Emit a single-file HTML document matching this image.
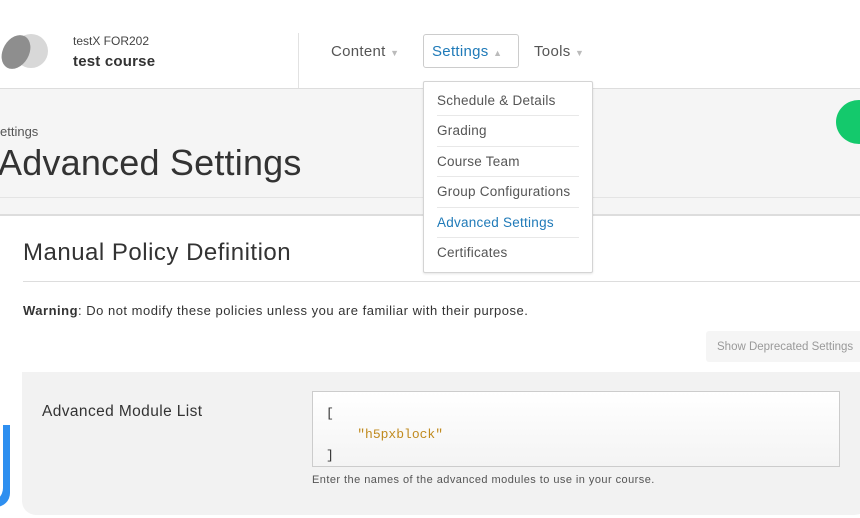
<!DOCTYPE html>
<html><head><style>
*{margin:0;padding:0;box-sizing:border-box}
body{width:860px;height:518px;overflow:hidden;background:#fff;font-family:"Liberation Sans",sans-serif;position:relative;color:#333}
.a{position:absolute;white-space:nowrap}
</style></head><body>
<div class="a" style="left:0;top:88px;width:860px;height:128px;background:#f5f5f5;border-top:1px solid #ddd;border-bottom:2px solid #ddd"></div>
<div class="a" style="left:0;top:197px;width:860px;height:1px;background:#e4e4e4"></div>
<div class="a" style="left:298px;top:33px;width:1px;height:55px;background:#e2e2e2"></div>
<div class="a" style="left:14px;top:34px;width:34px;height:34px;border-radius:50%;background:#d8d8d8"></div>
<div class="a" style="left:3px;top:34px;width:26px;height:36px;border-radius:50%;background:#8e8e8e;transform:rotate(30deg)"></div>
<div class="a" style="left:73px;top:34px;font-size:12px;color:#444">testX FOR202</div>
<div class="a" style="left:73px;top:53px;font-size:15px;font-weight:bold;color:#333;letter-spacing:0.2px">test course</div>
<div class="a" style="left:331px;top:43px;font-size:15px;color:#555;letter-spacing:0.3px">Content <span style="color:#bbb;font-size:9px">▼</span></div>
<div class="a" style="left:423px;top:34px;width:96px;height:34px;border:1px solid #ccc;border-radius:3px;background:#fff"></div>
<div class="a" style="left:432px;top:43px;font-size:15px;color:#1f7ab8;letter-spacing:0.3px">Settings <span style="color:#bbb;font-size:9px">▲</span></div>
<div class="a" style="left:534px;top:43px;font-size:15px;color:#555;letter-spacing:0.3px">Tools <span style="color:#bbb;font-size:9px">▼</span></div>
<div class="a" style="left:0;top:124px;font-size:13px;color:#555">ettings</div>
<div class="a" style="left:-2px;top:142px;font-size:36px;color:#333;letter-spacing:0.2px">Advanced Settings</div>
<div class="a" style="left:836px;top:100px;width:46px;height:44px;border-radius:50%;background:#14c96c"></div>
<div class="a" style="left:423px;top:81px;width:170px;height:192px;background:#fff;border:1px solid #d4d4d4;border-radius:2px;box-shadow:0 1px 2px rgba(0,0,0,.1)"></div>
<div class="a" style="left:437px;top:86px;font-size:13.5px;color:#555;line-height:30.4px;letter-spacing:0.25px">
Schedule &amp; Details<div style="height:1px;background:#e8e8e8;width:142px;margin-top:-1px"></div>
Grading<div style="height:1px;background:#e8e8e8;width:142px;margin-top:-1px"></div>
Course Team<div style="height:1px;background:#e8e8e8;width:142px;margin-top:-1px"></div>
Group Configurations<div style="height:1px;background:#e8e8e8;width:142px;margin-top:-1px"></div>
<span style="color:#1f7ab8">Advanced Settings</span><div style="height:1px;background:#e8e8e8;width:142px;margin-top:-1px"></div>
Certificates</div>
<div class="a" style="left:23px;top:239px;font-size:24px;color:#333;letter-spacing:0.5px">Manual Policy Definition</div>
<div class="a" style="left:23px;top:281px;width:837px;height:1px;background:#ddd"></div>
<div class="a" style="left:23px;top:303px;font-size:13px;color:#333;letter-spacing:0.5px"><b>Warning</b>: Do not modify these policies unless you are familiar with their purpose.</div>
<div class="a" style="left:706px;top:331px;width:160px;height:31px;background:#f5f5f5;border-radius:3px;font-size:11.5px;color:#999;padding:10px 0 0 11px">Show Deprecated Settings</div>
<div class="a" style="left:22px;top:372px;width:850px;height:143px;background:#f2f2f2;border-radius:0 0 18px 14px"></div>
<div class="a" style="left:42px;top:403px;font-size:15.5px;color:#333;letter-spacing:0.4px">Advanced Module List</div>
<div class="a" style="left:312px;top:391px;width:528px;height:76px;border:1px solid #ccc;background:linear-gradient(#fff,#f4f4f4);font-family:'Liberation Mono',monospace;font-size:13px;line-height:21px;padding:11px 0 0 13px;white-space:pre;color:#333">[
    <span style="color:#c08a1e">"h5pxblock"</span>
]</div>
<div class="a" style="left:312px;top:474px;font-size:11px;color:#555;letter-spacing:0.45px">Enter the names of the advanced modules to use in your course.</div>
<div class="a" style="left:-14px;top:425px;width:24px;height:82px;background:#2e8ff0;border-radius:0 0 14px 0"></div>
<div class="a" style="left:-14px;top:410px;width:17px;height:92px;background:#fff;border-radius:0 0 14px 0"></div>
</body></html>
